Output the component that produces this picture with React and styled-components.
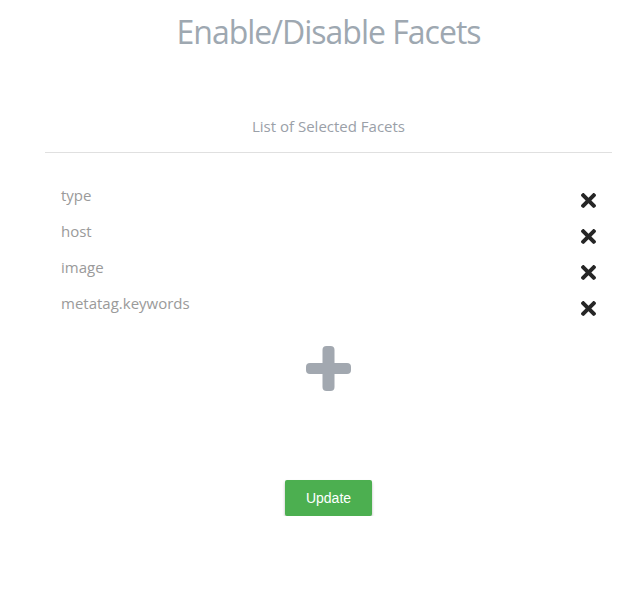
import React from "react";
import styled, { createGlobalStyle } from "styled-components";

const Global = createGlobalStyle`
  html, body { margin: 0; padding: 0; background: #fff; }
  body { font-family: "Open Sans", "Noto Sans", sans-serif; }
`;

const Page = styled.div`
  width: 567px;
  margin-left: 45px;
  display: flex;
  flex-direction: column;
  align-items: stretch;
`;

const Title = styled.h1`
  margin: 10px 0 0;
  text-align: center;
  font-size: 32px;
  font-weight: 400;
  line-height: 44px;
  letter-spacing: -1px;
  color: #9ea8b1;
`;

const Subtitle = styled.h2`
  margin: 62px 0 0;
  text-align: center;
  font-size: 15px;
  font-weight: 400;
  line-height: 20px;
  color: #9aa0a8;
`;

const Divider = styled.hr`
  margin: 16px 0 0;
  border: none;
  border-top: 1px solid #e0e0e0;
`;

const List = styled.ul`
  list-style: none;
  margin: 31px 0 0;
  padding: 0 16px;
  display: flex;
  flex-direction: column;
`;

const Row = styled.li`
  display: flex;
  align-items: flex-start;
  justify-content: space-between;
  height: 36px;
`;

const Name = styled.span`
  font-size: 15px;
  line-height: 22px;
  color: #9a9a9a;
`;

const Remove = styled.button`
  border: none;
  background: none;
  padding: 0;
  margin: 9px 0 0;
  width: 15px;
  height: 15px;
  cursor: pointer;
  display: flex;
  svg { width: 15px; height: 15px; fill: #262626; }
`;

const AddWrap = styled.div`
  display: flex;
  justify-content: center;
  margin-top: 18px;
`;

const AddButton = styled.button`
  border: none;
  background: none;
  padding: 0;
  margin-left: 0;
  width: 45px;
  height: 45px;
  cursor: pointer;
  svg { display: block; }
`;

const Footer = styled.div`
  display: flex;
  justify-content: center;
  margin-top: 89px;
`;

const UpdateButton = styled.button`
  width: 87px;
  height: 36px;
  border: none;
  border-radius: 2px;
  background: #4caf50;
  color: #fff;
  font-family: "Liberation Sans", Arial, sans-serif;
  font-size: 14px;
  margin-left: 0;
  box-shadow: 0 2px 3px rgba(0, 0, 0, 0.28);
  cursor: pointer;
`;

const TimesIcon = () => (
  <svg viewBox="0 80 352 352" aria-hidden="true">
    <path d="M242.72 256l100.07-100.07c12.28-12.28 12.28-32.19 0-44.48l-22.24-22.24c-12.28-12.28-32.19-12.28-44.48 0L176 189.28 75.93 89.21c-12.28-12.28-32.19-12.28-44.48 0L9.21 111.45c-12.28 12.28-12.28 32.19 0 44.48L109.28 256 9.21 356.07c-12.28 12.28-12.28 32.19 0 44.48l22.24 22.24c12.28 12.28 32.2 12.28 44.48 0L176 322.72l100.07 100.07c12.28 12.28 32.2 12.28 44.48 0l22.24-22.24c12.28-12.28 12.28-32.19 0-44.48L242.72 256z" />
  </svg>
);

const PlusIcon = () => (
  <svg width="45" height="45" viewBox="0 0 45 45" aria-hidden="true">
    <rect x="16.5" y="0" width="12" height="45" rx="4" fill="#a2a8b0" />
    <rect x="0" y="17" width="45" height="11" rx="4" fill="#a2a8b0" />
  </svg>
);

const facets = ["type", "host", "image", "metatag.keywords"];

export default function App() {
  return (
    <>
      <Global />
      <Page>
        <Title>Enable/Disable Facets</Title>
        <Subtitle>List of Selected Facets</Subtitle>
        <Divider />
        <List>
          {facets.map((f) => (
            <Row key={f}>
              <Name>{f}</Name>
              <Remove aria-label={`Remove ${f}`}>
                <TimesIcon />
              </Remove>
            </Row>
          ))}
        </List>
        <AddWrap>
          <AddButton aria-label="Add facet">
            <PlusIcon />
          </AddButton>
        </AddWrap>
        <Footer>
          <UpdateButton>Update</UpdateButton>
        </Footer>
      </Page>
    </>
  );
}
